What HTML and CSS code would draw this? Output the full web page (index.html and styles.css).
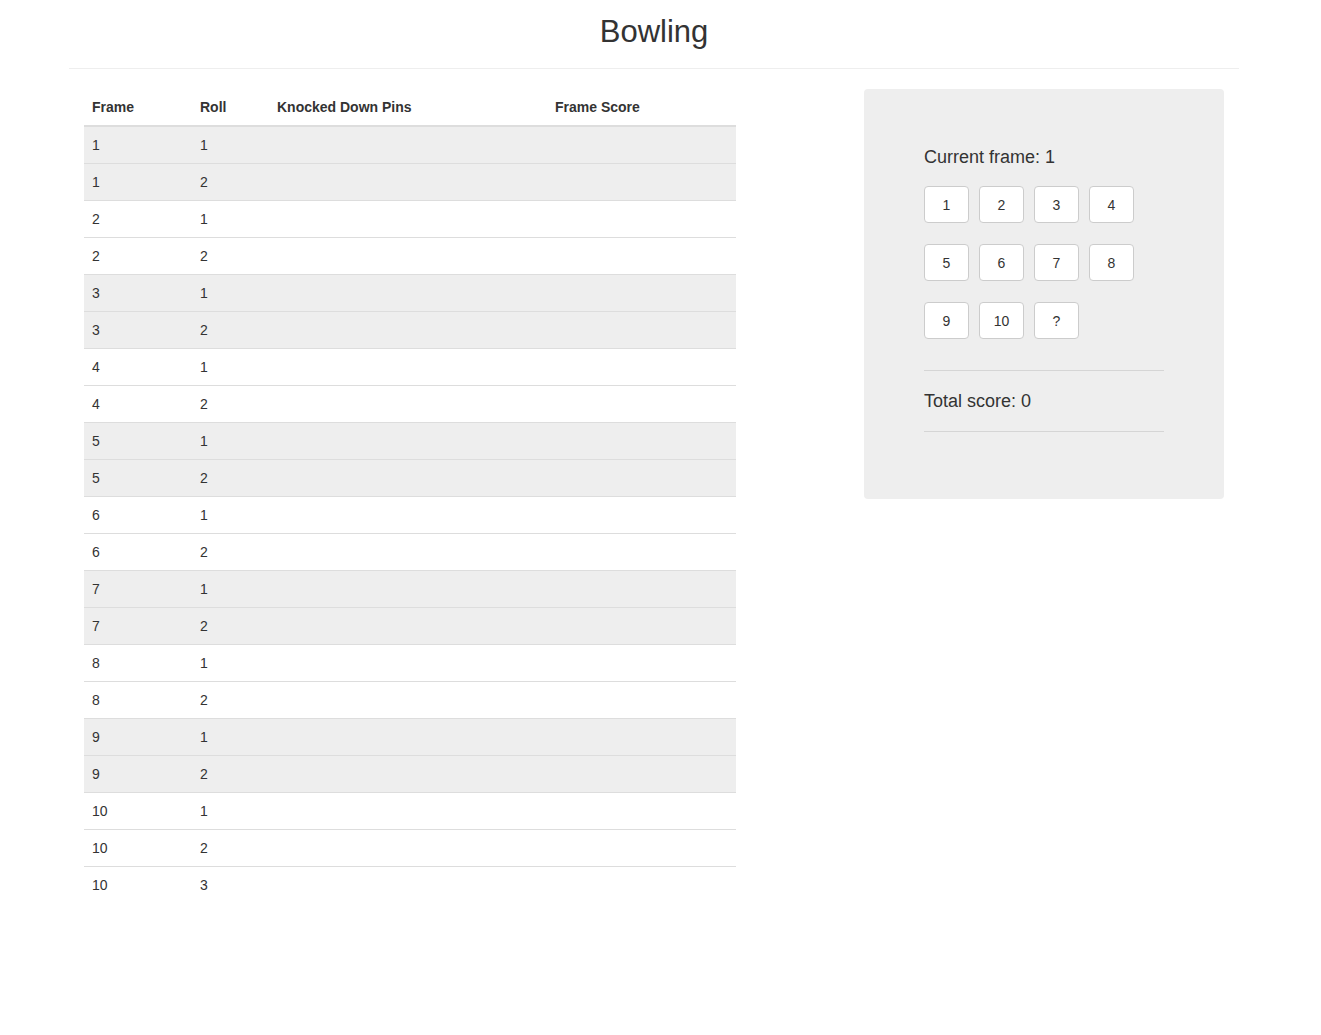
FILE: index.html
```html
<!DOCTYPE html>
<html>
<head>
<meta charset="utf-8">
<title>Bowling</title>
<link rel="stylesheet" href="styles.css">
</head>
<body>
<div class="page">
  <div class="container">
    <div class="page-header">
      <h1>Bowling</h1>
    </div>
    <div class="row">
      <div class="col-table">
        <table class="score-table">
          <thead>
            <tr>
              <th class="c-frame">Frame</th>
              <th class="c-roll">Roll</th>
              <th class="c-pins">Knocked Down Pins</th>
              <th class="c-score">Frame Score</th>
            </tr>
          </thead>
          <tbody>
            <tr class="odd"><td>1</td><td>1</td><td></td><td></td></tr>
            <tr class="odd"><td>1</td><td>2</td><td></td><td></td></tr>
            <tr><td>2</td><td>1</td><td></td><td></td></tr>
            <tr><td>2</td><td>2</td><td></td><td></td></tr>
            <tr class="odd"><td>3</td><td>1</td><td></td><td></td></tr>
            <tr class="odd"><td>3</td><td>2</td><td></td><td></td></tr>
            <tr><td>4</td><td>1</td><td></td><td></td></tr>
            <tr><td>4</td><td>2</td><td></td><td></td></tr>
            <tr class="odd"><td>5</td><td>1</td><td></td><td></td></tr>
            <tr class="odd"><td>5</td><td>2</td><td></td><td></td></tr>
            <tr><td>6</td><td>1</td><td></td><td></td></tr>
            <tr><td>6</td><td>2</td><td></td><td></td></tr>
            <tr class="odd"><td>7</td><td>1</td><td></td><td></td></tr>
            <tr class="odd"><td>7</td><td>2</td><td></td><td></td></tr>
            <tr><td>8</td><td>1</td><td></td><td></td></tr>
            <tr><td>8</td><td>2</td><td></td><td></td></tr>
            <tr class="odd"><td>9</td><td>1</td><td></td><td></td></tr>
            <tr class="odd"><td>9</td><td>2</td><td></td><td></td></tr>
            <tr><td>10</td><td>1</td><td></td><td></td></tr>
            <tr><td>10</td><td>2</td><td></td><td></td></tr>
            <tr><td>10</td><td>3</td><td></td><td></td></tr>
          </tbody>
        </table>
      </div>
      <div class="col-panel">
        <div class="well">
          <h4 class="label-line">Current frame: 1</h4>
          <div class="pins">
            <button class="pin">1</button>
            <button class="pin">2</button>
            <button class="pin">3</button>
            <button class="pin">4</button>
            <button class="pin">5</button>
            <button class="pin">6</button>
            <button class="pin">7</button>
            <button class="pin">8</button>
            <button class="pin">9</button>
            <button class="pin">10</button>
            <button class="pin">?</button>
          </div>
          <hr class="sep sep-first">
          <h4 class="label-line">Total score: 0</h4>
          <hr class="sep">
        </div>
      </div>
    </div>
  </div>
</div>
</body>
</html>
```

FILE: styles.css
```css
* { box-sizing: border-box; }
html, body { margin: 0; padding: 0; background: #fff; }
body {
  font-family: "Liberation Sans", Arial, sans-serif;
  font-size: 14px;
  line-height: 20px;
  color: #333;
}
.page { width: 1308px; }
.container { width: 1170px; margin: 0 auto; }
.page-header {
  border-bottom: 1px solid #eee;
  padding-bottom: 19px;
  text-align: center;
}
.page-header h1 {
  margin: 0;
  padding-top: 15px;
  font-size: 31px;
  line-height: 34px;
  font-weight: 500;
}
.row { display: flex; margin-top: 20px; }
.col-table { width: 682px; padding: 0 15px; }
.col-panel { width: 390px; padding: 0 15px; margin-left: 98px; }

.score-table { width: 100%; border-collapse: collapse; border-spacing: 0; }
.score-table th {
  text-align: left;
  font-weight: bold;
  padding: 8px;
  line-height: 20px;
  border-bottom: 2px solid #ddd;
}
.c-frame { width: 108px; }
.c-roll { width: 77px; }
.c-pins { width: 278px; }
.score-table td {
  padding: 8px;
  line-height: 20px;
  height: 37px;
  border-top: 1px solid #ddd;
}
.score-table tbody tr:first-child td { border-top: 0; height: 36px; }
.score-table tr.odd td { background: #eee; }

.well {
  background: #eee;
  border-radius: 4px;
  padding: 58px 60px 67px;
}
.label-line {
  margin: 0;
  font-size: 18px;
  line-height: 20px;
  font-weight: 500;
}
.pins {
  display: flex;
  flex-wrap: wrap;
  gap: 21px 10px;
  margin-top: 19px;
  width: 220px;
}
.pin {
  width: 45px;
  height: 37px;
  padding: 0;
  background: #fff;
  border: 1px solid #ccc;
  border-radius: 4px;
  font-family: "Liberation Sans", Arial, sans-serif;
  font-size: 14px;
  color: #333;
}
.sep {
  border: 0;
  border-top: 1px solid #d5d5d5;
  margin: 20px 0 0;
}
.sep-first { margin-top: 31px; }
.sep + .label-line { margin-top: 20px; }
```
